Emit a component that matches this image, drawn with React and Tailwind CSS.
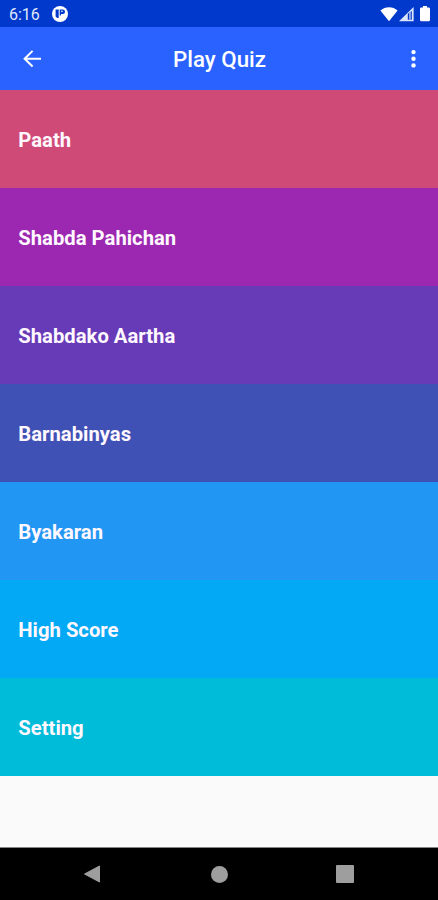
const rows = [
  ['Paath', 'bg-[#cf4a76]'],
  ['Shabda Pahichan', 'bg-[#9c27b0]'],
  ['Shabdako Aartha', 'bg-[#673ab7]'],
  ['Barnabinyas', 'bg-[#3f51b5]'],
  ['Byakaran', 'bg-[#2196f3]'],
  ['High Score', 'bg-[#03a9f4]'],
  ['Setting', 'bg-[#00bcd8]'],
];

function StatusBar() {
  return (
    <div className="flex h-[27px] shrink-0 items-center bg-[#0039cb] pr-[8px] pl-[9px]">
      <span className="w-[31px] pt-[2px] text-[16px] leading-none whitespace-nowrap text-[#dfe7fb]">6:16</span>
      <svg className="ml-[12px] mt-px" width="16" height="16" viewBox="0 0 16 16">
        <circle cx="8" cy="8" r="8" fill="#fff" />
        <path d="M3.600 3.400h3.100v8.600H5.200L3.600 10.400z" fill="#0039cb" />
        <path d="M7.700 3.400h3a2.300 2.300 0 0 1 2.300 2.300v.4a2 2 0 0 1-2 2H9v1.400H7.700z" fill="#0039cb" />
        <path d="M9 4.700h1.800v1.100H9z" fill="#fff" />
      </svg>
      <div className="ml-auto flex items-center">
        <svg width="18" height="16" viewBox="0 0 18 16">
          <path d="M.4 4.600C2.800 2.400 5.800 1.200 9 1.200s6.200 1.200 8.600 3.400L9 15.200z" fill="#fff" />
        </svg>
        <svg className="ml-px" width="15" height="16" viewBox="0 0 15 16">
          <path d="M0 15.200 14.600 1v14.200z" fill="#dce4fa" />
          <path d="M8.800 7.800 12.800 5v8.700h-4z" fill="#0039cb" />
          <path d="M10.200 6h1.500v7.700h-1.500z" fill="#b4c3ef" />
        </svg>
        <svg className="ml-[6px]" width="10" height="16" viewBox="0 0 10 16">
          <path d="M3 0h4v1.600h1.700q1.300 0 1.300 1.300v11q0 1.300-1.300 1.300H1.300Q0 15.200 0 13.900v-11q0-1.300 1.300-1.300H3z" fill="#fff" />
        </svg>
      </div>
    </div>
  );
}

function AppBar() {
  return (
    <header className="grid h-[63px] shrink-0 grid-cols-[1fr_auto_1fr] items-center bg-[#2962ff] pr-[15px] pl-[23px] text-white">
      <svg width="18" height="18" viewBox="0 0 18 18" fill="none" stroke="currentColor" strokeWidth="2">
        <path d="M18 8.700H1.800M9.600 .9 1.600 8.700l8 7.800" />
      </svg>
      <h1 className="mr-[7px] pt-[2px] text-[22.300px] leading-none font-medium">Play Quiz</h1>
      <svg className="justify-self-end" width="20" height="20" viewBox="0 0 20 20" fill="currentColor">
        <circle cx="10.500" cy="3.100" r="2.200" />
        <circle cx="10.500" cy="9.700" r="2.200" />
        <circle cx="10.500" cy="16.400" r="2.200" />
      </svg>
    </header>
  );
}

function NavBar() {
  return (
    <nav className="flex h-[53px] shrink-0 items-center justify-between border-t border-[#858585] bg-black pr-[84px] pl-[83px]">
      <svg width="18" height="18" viewBox="0 0 18 18">
        <path d="M1.500 9 16.500 1v16z" fill="#9e9e9e" stroke="#9e9e9e" strokeLinejoin="round" />
      </svg>
      <span className="ml-px size-[17px] rounded-full bg-[#9e9e9e]" />
      <span className="size-[18px] rounded-[1px] bg-[#9e9e9e]" />
    </nav>
  );
}

export default function App() {
  return (
    <div className="flex h-[900px] w-[438px] flex-col overflow-hidden bg-[#fafafa] font-[Roboto,sans-serif]">
      <StatusBar />
      <AppBar />
      <main className="grow">
        {rows.map(([label, color]) => (
          <div key={label} className={`flex h-[98px] items-center pt-[2px] pl-[18.300px] text-[20.250px] font-bold text-[#fff8ff] ${color}`}>
            {label}
          </div>
        ))}
      </main>
      <NavBar />
    </div>
  );
}
